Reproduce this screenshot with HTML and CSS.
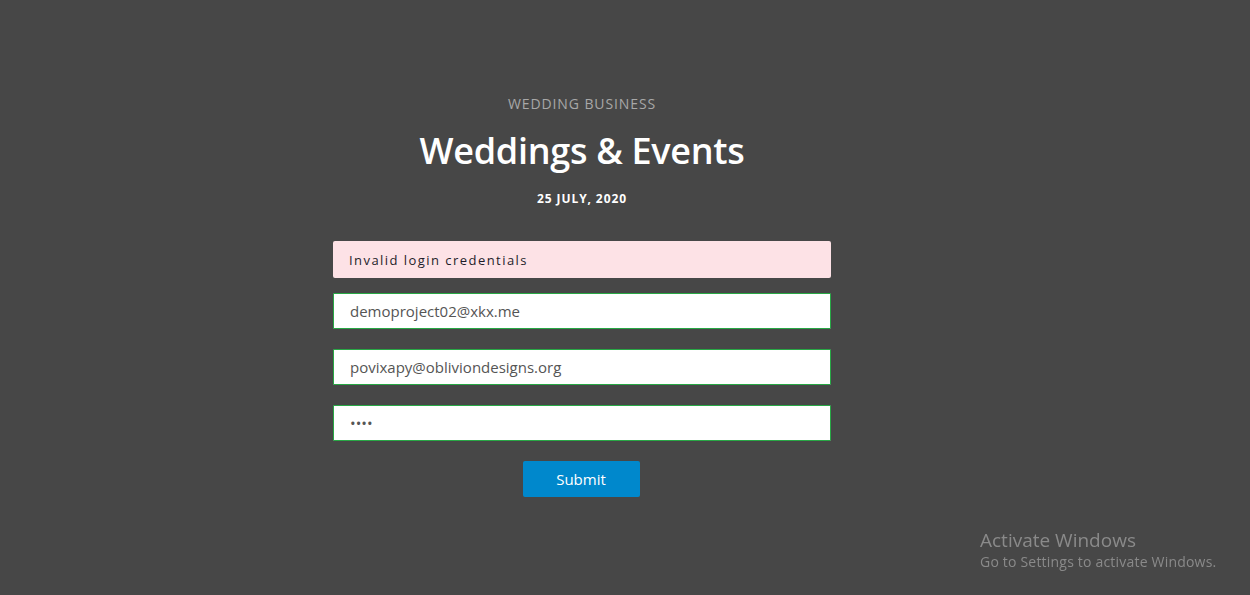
FILE: index.html
```html
<!DOCTYPE html>
<html>
<head>
<meta charset="utf-8">
<link rel="stylesheet" href="styles.css">
</head>
<body>
<main class="page">
  <header class="hero">
    <p class="eyebrow">WEDDING BUSINESS</p>
    <h1 class="title">Weddings &amp; Events</h1>
    <p class="date">25 JULY, 2020</p>
  </header>
  <form class="form">
    <div class="alert">Invalid login credentials</div>
    <input class="field" type="text" value="demoproject02@xkx.me">
    <input class="field" type="text" value="povixapy@obliviondesigns.org">
    <input class="field" type="password" value="abcd">
    <div class="actions"><button class="btn" type="button">Submit</button></div>
  </form>
</main>
<div class="watermark">
  <div class="wm-title">Activate Windows</div>
  <div class="wm-sub">Go to Settings to activate Windows.</div>
</div>
</body>
</html>
```
FILE: styles.css
```css
html, body {
  margin: 0;
  padding: 0;
  height: 100%;
  background: #474747;
  font-family: "Open Sans", "Noto Sans", sans-serif;
}
.page {
  display: flex;
  flex-direction: column;
  align-items: center;
  padding-top: 94px;
  padding-right: 86px;
}
.hero {
  display: flex;
  flex-direction: column;
  align-items: center;
  width: 498px;
}
.eyebrow {
  margin: 0;
  font-size: 14px;
  letter-spacing: 0.9px;
  color: #a8a8a8;
  line-height: 20px;
}
.title {
  margin: 15px 0 0;
  font-size: 36px;
  font-weight: 600;
  color: #ffffff;
  line-height: 44px;
  letter-spacing: -0.3px;
}
.date {
  margin: 18px 0 0;
  font-size: 12px;
  font-weight: 700;
  letter-spacing: 0.9px;
  color: #ffffff;
  line-height: 16px;
}
.form {
  display: flex;
  flex-direction: column;
  width: 498px;
  margin-top: 34px;
}
.alert {
  height: 37px;
  box-sizing: border-box;
  background: #fde2e6;
  border-radius: 2px;
  padding: 0 16px;
  display: flex;
  align-items: center;
  font-size: 13px;
  letter-spacing: 1.45px;
  color: #1d1d2a;
}
.field {
  margin-top: 15px;
  height: 36px;
  box-sizing: border-box;
  border: 1px solid #28a745;
  border-radius: 1px;
  background: #fff;
  padding: 0 16px;
  font-family: "Open Sans", "Noto Sans", sans-serif;
  font-size: 15px;
  color: #555;
  outline: none;
}
.field + .field { margin-top: 20px; }
.actions {
  display: flex;
  justify-content: center;
  margin-top: 20px;
}
.btn {
  width: 117px;
  height: 36px;
  border: none;
  border-radius: 2px;
  background: #0088cc;
  color: #fff;
  font-family: "Open Sans", "Noto Sans", sans-serif;
  font-size: 15px;
  transform: translateX(-1px);
}
.watermark {
  position: fixed;
  left: 980px;
  top: 528px;
  color: #8a8a8a;
}
.wm-title {
  font-size: 19px;
  line-height: 24px;
}
.wm-sub {
  font-size: 14px;
  line-height: 20px;
  letter-spacing: 0.2px;
}
```
